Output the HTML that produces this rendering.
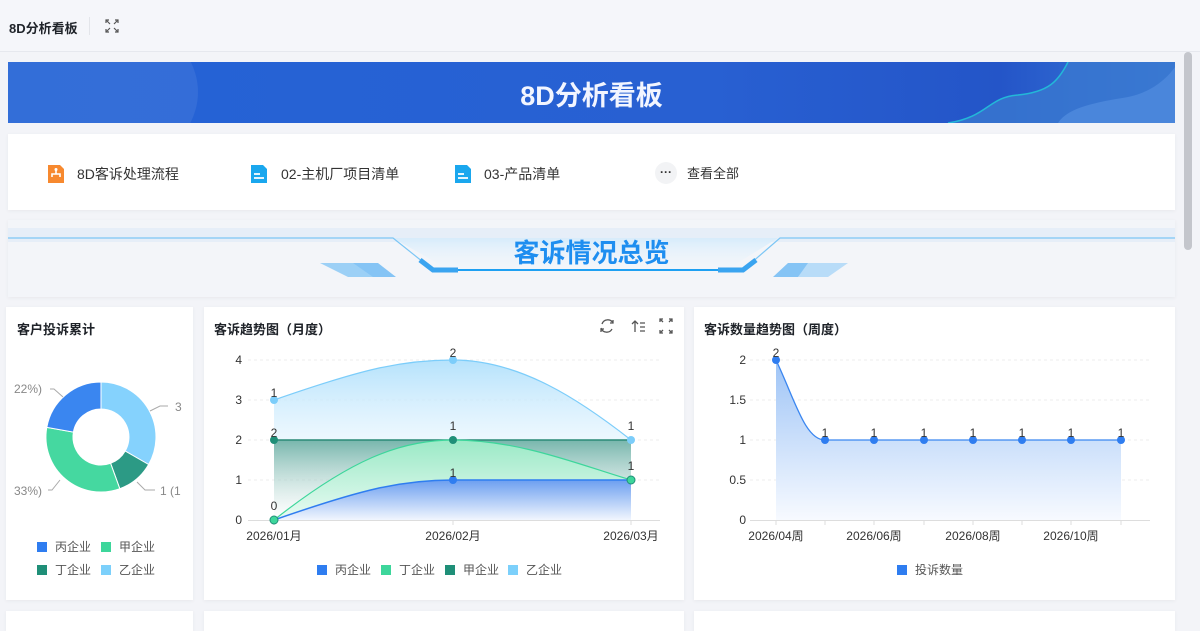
<!DOCTYPE html>
<html><head><meta charset="utf-8"><style>
*{margin:0;padding:0;box-sizing:border-box}
body{width:1200px;height:627px;overflow:hidden;background:#f3f4f8;font-family:"Liberation Sans","Noto Sans CJK SC",sans-serif;position:relative;color:#333}
.abs{position:absolute}
.card{position:absolute;background:#fff;box-shadow:0 1px 4px rgba(0,0,0,.05)}
.t{font-size:13px;font-weight:bold;color:#1f2329}
</style></head><body>
<div class="abs" style="left:0;top:0;width:1200px;height:52px;background:#f5f6fa;border-bottom:1px solid #e6e8ee"></div>
<div class="abs" style="left:9px;top:18px;font-size:13px;font-weight:bold;color:#1f2329">8D分析看板</div>
<div class="abs" style="left:89px;top:17px;width:1px;height:18px;background:#e3e5ea"></div>
<svg class="abs" style="left:105px;top:19px" width="14" height="14" viewBox="0 0 14 14" fill="none" stroke="#555" stroke-width="1.2"><path d="M1 4V1h3M10 1h3v3M13 10v3h-3M4 13H1v-3M1 1l4 4M13 1l-4 4M13 13l-4-4M1 13l4-4"/></svg>
<div class="abs" style="left:1184px;top:52px;width:8px;height:198px;background:#c4c6cc;border-radius:4px"></div>

<div class="abs" style="left:8px;top:62px;width:1167px;height:61px;background:linear-gradient(90deg,#2463d6,#2860d2 60%,#2455c8 85%,#3a7ad8);overflow:hidden">
<div class="abs" style="left:-60px;top:-60px;width:250px;height:180px;border-radius:50%;background:rgba(255,255,255,.07)"></div>
<svg class="abs" style="left:900px;top:0" width="267" height="61"><path d="M40 61C80 55 80 35 110 33C140 30 150 20 160 0H267V61Z" fill="#3a78d0" opacity=".8"/><path d="M40 61C80 55 80 35 110 33C140 30 150 20 160 0" stroke="#23b8d8" fill="none" stroke-width="1.5"/><path d="M150 61C160 45 190 40 220 35C245 30 260 15 267 5V61Z" fill="#4a86db"/></svg>
<div class="abs" style="left:0;width:1167px;top:12px;text-align:center;font-size:27px;font-weight:bold;color:#f2f5ff">8D分析看板</div>
</div>

<div class="card" style="left:8px;top:134px;width:1167px;height:76px"></div>
<svg class="abs" style="left:46px;top:163px" width="20" height="22"><path d="M2 2h12l4 4v14H2z" fill="#f7892f"/><path d="M10 7v4M6 14v-3h8v3" stroke="#fff" stroke-width="1.6" fill="none"/><circle cx="10" cy="6.5" r="1.5" fill="#fff"/></svg>
<div class="abs" style="left:77px;top:164px;font-size:14px;line-height:20px;color:#333">8D客诉处理流程</div>
<svg class="abs" style="left:249px;top:163px" width="20" height="22"><path d="M2 2h12l4 4v14H2z" fill="#1aa7ee"/><path d="M5 11h6M5 15h10" stroke="#fff" stroke-width="1.8"/></svg>
<div class="abs" style="left:281px;top:164px;font-size:14px;line-height:20px;color:#333">02-主机厂项目清单</div>
<svg class="abs" style="left:453px;top:163px" width="20" height="22"><path d="M2 2h12l4 4v14H2z" fill="#1aa7ee"/><path d="M5 11h6M5 15h10" stroke="#fff" stroke-width="1.8"/></svg>
<div class="abs" style="left:484px;top:164px;font-size:14px;line-height:20px;color:#333">03-产品清单</div>
<div class="abs" style="left:655px;top:162px;width:22px;height:22px;border-radius:50%;background:#f2f3f5;text-align:center;font-size:12px;line-height:20px;color:#333;font-weight:bold">···</div>
<div class="abs" style="left:687px;top:164px;font-size:13px;line-height:20px;color:#333">查看全部</div>

<div class="abs" style="left:8px;top:220px;width:1167px;height:77px;background:#f3f5f9;box-shadow:0 1px 4px rgba(0,0,0,.05)">
<svg width="1167" height="77" class="abs" style="left:0;top:0">
<defs><linearGradient id="hg" x1="0" y1="0" x2="0" y2="1"><stop offset="0" stop-color="#d7ecfb"/><stop offset="1" stop-color="#f3f8fd" stop-opacity="0"/></linearGradient></defs>
<rect x="0" y="8" width="1167" height="14" fill="#e6eef8"/>
<path d="M385 18L450 55H710L770 18Z" fill="url(#hg)"/>
<path d="M0 18H385L425 50H450M710 50H735L772 18H1167" stroke="#7cc6f5" stroke-width="1.2" fill="none"/>
<path d="M412 40L425 50H450" stroke="#3aa4f0" stroke-width="5" fill="none"/>
<path d="M710 50H735L748 40" stroke="#3aa4f0" stroke-width="5" fill="none"/>
<path d="M450 50H710" stroke="#1ea0f2" stroke-width="2"/>
<path d="M312 43H350L380 57H340Z" fill="#9cd0f6"/><path d="M345 43H370L388 57H365Z" fill="#85c4f5"/>
<path d="M780 43H805L790 57H765Z" fill="#85c4f5"/><path d="M800 43H840L820 57H790Z" fill="#b8dcf8"/>
</svg>
<div class="abs" style="left:0;width:1167px;top:13px;text-align:center;font-size:26px;font-weight:bold;color:#1e8ef0">客诉情况总览</div>
</div>

<div class="card" style="left:6px;top:307px;width:187px;height:293px"></div>
<div class="abs t" style="left:17px;top:319px">客户投诉累计</div>
<svg class="abs" style="left:0;top:307px" width="193" height="293" viewBox="0 307 193 293" font-size="12" fill="#666">
<path d="M101 382A55 55 0 0 1 148.6 464.5L125.2 451A28 28 0 0 0 101 409Z" fill="#85d2fd" stroke="#fff"/>
<path d="M148.6 464.5A55 55 0 0 1 119.8 488.7L110.6 463.3A28 28 0 0 0 125.2 451Z" fill="#2c9a85" stroke="#fff"/>
<path d="M119.8 488.7A55 55 0 0 1 46.8 427.4L73.4 432.1A28 28 0 0 0 110.6 463.3Z" fill="#45d8a0" stroke="#fff"/>
<path d="M46.8 427.4A55 55 0 0 1 101 382L101 409A28 28 0 0 0 73.4 432.1Z" fill="#3a86f0" stroke="#fff"/>
<path d="M50 389H54L63 397M150 411L160 406H168M137 482L145 490H155M60 480L52 490H48" stroke="#aaa" fill="none"/>
<text x="14" y="393" fill="#888">22%)</text><text x="175" y="411" fill="#888">3</text>
<text x="14" y="495" fill="#888">33%)</text><text x="160" y="495" fill="#888">1 (1</text>
<rect x="37" y="542" width="10" height="10" fill="#2f7df0"/><text x="55" y="551" fill="#555">丙企业</text>
<rect x="101" y="542" width="10" height="10" fill="#3dd69b"/><text x="119" y="551" fill="#555">甲企业</text>
<rect x="37" y="565" width="10" height="10" fill="#1f8f78"/><text x="55" y="574" fill="#555">丁企业</text>
<rect x="101" y="565" width="10" height="10" fill="#7cd0fb"/><text x="119" y="574" fill="#555">乙企业</text>
</svg>

<div class="card" style="left:204px;top:307px;width:480px;height:293px"></div>
<div class="abs t" style="left:214px;top:319px">客诉趋势图（月度）</div>
<svg class="abs" style="left:598px;top:318px" width="80" height="16" fill="none" stroke="#555" stroke-width="1.3"><path d="M15 5A6 6 0 0 0 4 6M3 10a6 6 0 0 0 11 1M15 2v3h-3M3 14v-3h3"/><path d="M37 14V3M34 6l3-3 3 3M42 5h5M42 9h5M42 13h5"/><path d="M62 4V1h3M71 1h3v3M74 12v3h-3M65 15h-3v-3M62 1l3 3M74 1l-3 3M74 15l-3-3M62 15l3-3"/></svg>
<svg class="abs" style="left:204px;top:307px" width="480" height="293" viewBox="204 307 480 293" font-size="12" fill="#333">
<defs>
<linearGradient id="g1" x1="0" y1="0" x2="0" y2="1"><stop offset="0" stop-color="#b5e2fc"/><stop offset="1" stop-color="#fff" stop-opacity="0"/></linearGradient>
<linearGradient id="g2" x1="0" y1="0" x2="0" y2="1"><stop offset="0" stop-color="#2a8a76" stop-opacity=".6"/><stop offset="1" stop-color="#fff" stop-opacity=".3"/></linearGradient>
<linearGradient id="g3" x1="0" y1="0" x2="0" y2="1"><stop offset="0" stop-color="#9be9c6"/><stop offset="1" stop-color="#e9fbf3"/></linearGradient>
<linearGradient id="g4" x1="0" y1="0" x2="0" y2="1"><stop offset="0" stop-color="#6c9ff0"/><stop offset="1" stop-color="#f1f6fe"/></linearGradient>
<linearGradient id="g5" x1="0" y1="0" x2="0" y2="1"><stop offset="0" stop-color="#9ec4f6"/><stop offset="1" stop-color="#f7faff"/></linearGradient>
</defs>
<g stroke="#eee" stroke-dasharray="3 3"><path d="M248 360H660M248 400H660M248 440H660M248 480H660"/></g>
<path d="M248 520.5H660M274 520v5M453 520v5M631 520v5" stroke="#ddd"/>
<path d="M274 400C360 370 400 360 453 360C520 360 580 400 631 440V520H274Z" fill="url(#g1)"/>
<path d="M274 400C360 370 400 360 453 360C520 360 580 400 631 440" stroke="#7ccdfa" fill="none" stroke-width="1.2"/>
<path d="M274 440H631V520H274Z" fill="url(#g2)"/>
<path d="M274 440H631" stroke="#2a8a76" stroke-width="1.5"/>
<path d="M274 520C350 460 400 440 453 440C520 440 580 465 631 480V520Z" fill="url(#g3)"/>
<path d="M274 520C350 460 400 440 453 440C520 440 580 465 631 480" stroke="#3dd69b" fill="none" stroke-width="1.2"/>
<path d="M274 520C360 490 400 480 453 480H631V520Z" fill="url(#g4)"/>
<path d="M274 520C360 490 400 480 453 480H631" stroke="#2f7df0" fill="none" stroke-width="1.5"/>
<g fill="#7ccdfa"><circle cx="274" cy="400" r="4"/><circle cx="453" cy="360" r="4"/><circle cx="631" cy="440" r="4"/></g>
<g fill="#1f8f78"><circle cx="274" cy="440" r="4"/><circle cx="453" cy="440" r="4"/></g>
<g fill="#2f7df0"><circle cx="453" cy="480" r="4"/></g>
<g fill="#3dd69b" stroke="#1f8f78"><circle cx="274" cy="520" r="4"/><circle cx="631" cy="480" r="4"/></g>
<g text-anchor="middle"><text x="274" y="397">1</text><text x="453" y="357">2</text><text x="274" y="437">2</text><text x="453" y="430">1</text><text x="631" y="430">1</text><text x="453" y="477">1</text><text x="631" y="470">1</text><text x="274" y="510">0</text>
<text x="274" y="540">2026/01月</text><text x="453" y="540">2026/02月</text><text x="631" y="540">2026/03月</text></g>
<g text-anchor="end"><text x="242" y="364">4</text><text x="242" y="404">3</text><text x="242" y="444">2</text><text x="242" y="484">1</text><text x="242" y="524">0</text></g>
<rect x="317" y="565" width="10" height="10" fill="#2f7df0"/><text x="335" y="574" fill="#555">丙企业</text>
<rect x="381" y="565" width="10" height="10" fill="#3dd69b"/><text x="399" y="574" fill="#555">丁企业</text>
<rect x="445" y="565" width="10" height="10" fill="#1f8f78"/><text x="463" y="574" fill="#555">甲企业</text>
<rect x="508" y="565" width="10" height="10" fill="#7cd0fb"/><text x="526" y="574" fill="#555">乙企业</text>
</svg>

<div class="card" style="left:694px;top:307px;width:481px;height:293px"></div>
<div class="abs t" style="left:704px;top:319px">客诉数量趋势图（周度）</div>
<svg class="abs" style="left:694px;top:307px" width="481" height="293" viewBox="694 307 481 293" font-size="12" fill="#333">
<g stroke="#eee" stroke-dasharray="3 3"><path d="M750 360H1150M750 400H1150M750 440H1150M750 480H1150"/></g>
<path d="M750 520.5H1150M776 520v5M825 520v5M874 520v5M924 520v5M973 520v5M1022 520v5M1071 520v5M1121 520v5" stroke="#ddd"/>
<path d="M776 360C795 400 805 440 825 440H1121V520H776Z" fill="url(#g5)"/>
<path d="M776 360C795 400 805 440 825 440H1121" stroke="#3a86f0" fill="none" stroke-width="1.3"/>
<g fill="#2f7df0"><circle cx="776" cy="360" r="4"/><circle cx="825" cy="440" r="4"/><circle cx="874" cy="440" r="4"/><circle cx="924" cy="440" r="4"/><circle cx="973" cy="440" r="4"/><circle cx="1022" cy="440" r="4"/><circle cx="1071" cy="440" r="4"/><circle cx="1121" cy="440" r="4"/></g>
<g text-anchor="middle"><text x="776" y="357">2</text><text x="825" y="437">1</text><text x="874" y="437">1</text><text x="924" y="437">1</text><text x="973" y="437">1</text><text x="1022" y="437">1</text><text x="1071" y="437">1</text><text x="1121" y="437">1</text>
<text x="776" y="540">2026/04周</text><text x="874" y="540">2026/06周</text><text x="973" y="540">2026/08周</text><text x="1071" y="540">2026/10周</text></g>
<g text-anchor="end"><text x="746" y="364">2</text><text x="746" y="404">1.5</text><text x="746" y="444">1</text><text x="746" y="484">0.5</text><text x="746" y="524">0</text></g>
<rect x="897" y="565" width="10" height="10" fill="#2f7df0"/><text x="915" y="574" fill="#555">投诉数量</text>
</svg>

<div class="card" style="left:6px;top:611px;width:187px;height:20px"></div>
<div class="card" style="left:204px;top:611px;width:480px;height:20px"></div>
<div class="card" style="left:694px;top:611px;width:481px;height:20px"></div>
</body></html>
